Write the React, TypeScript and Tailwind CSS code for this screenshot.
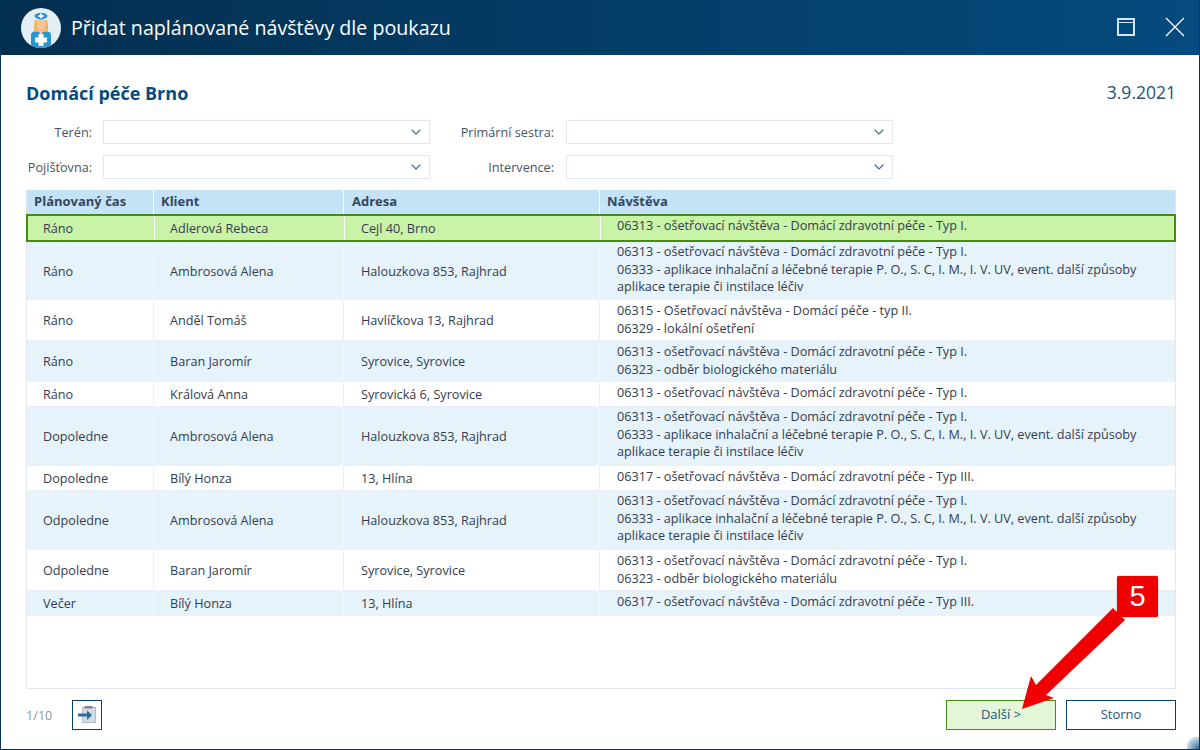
import { ChevronDown } from "lucide-react";

const typ1 = "06313 - ošetřovací návštěva - Domácí zdravotní péče - Typ I.";
const typ3 = "06317 - ošetřovací návštěva - Domácí zdravotní péče - Typ III.";
const inhal = [
    typ1,
    "06333 - aplikace inhalační a léčebné terapie P. O., S. C, I. M., I. V. UV, event. další způsoby",
    "aplikace terapie či instilace léčiv",
];
const odber = [typ1, "06323 - odběr biologického materiálu"];

const rows = [
    { time: "Ráno", client: "Adlerová Rebeca", address: "Cejl 40, Brno", visits: [typ1], h: "h-[28px]", tone: "selected" },
    { time: "Ráno", client: "Ambrosová Alena", address: "Halouzkova 853, Rajhrad", visits: inhal, h: "h-[58px]", tone: "blue" },
    { time: "Ráno", client: "Anděl Tomáš", address: "Havlíčkova 13, Rajhrad", visits: ["06315 - Ošetřovací návštěva - Domácí péče - typ II.", "06329 - lokální ošetření"], h: "h-[41px]", tone: "white" },
    { time: "Ráno", client: "Baran Jaromír", address: "Syrovice, Syrovice", visits: odber, h: "h-[41px]", tone: "blue" },
    { time: "Ráno", client: "Králová Anna", address: "Syrovická 6, Syrovice", visits: [typ1], h: "h-[25px]", tone: "white" },
    { time: "Dopoledne", client: "Ambrosová Alena", address: "Halouzkova 853, Rajhrad", visits: inhal, h: "h-[59px]", tone: "blue" },
    { time: "Dopoledne", client: "Bílý Honza", address: "13, Hlína", visits: [typ3], h: "h-[25px]", tone: "white" },
    { time: "Odpoledne", client: "Ambrosová Alena", address: "Halouzkova 853, Rajhrad", visits: inhal, h: "h-[59px]", tone: "blue" },
    { time: "Odpoledne", client: "Baran Jaromír", address: "Syrovice, Syrovice", visits: odber, h: "h-[41px]", tone: "white" },
    { time: "Večer", client: "Bílý Honza", address: "13, Hlína", visits: [typ3], h: "h-[25px]", tone: "blue" },
];

const columns = "grid grid-cols-[127px_190px_256px_1fr]";

function NurseIcon() {
    return (
        <svg width="40" height="40" viewBox="0 0 40 40" className="shrink-0">
            <defs>
                <clipPath id="nurse-clip"><circle cx="20" cy="20" r="20" /></clipPath>
            </defs>
            <circle cx="20" cy="20" r="20" fill="#e4eef5" />
            <g clipPath="url(#nurse-clip)">
                <path d="M10 40V27q0-3 4-4l3-1h6l3 1q4 1 4 4v13z" fill="#2796cf" />
                <path d="M14 12q-2 7 0 12h12q2-5 0-12z" fill="#efb25a" />
                <path d="M15.5 12q4.500-3 9 0v6q-1 4-3 5v2l-1.500 2-1.500-2v-2q-2-1-3-5z" fill="#f7c39a" />
                <ellipse cx="20" cy="8" rx="6.500" ry="3.200" fill="#2796cf" />
                <path d="M19 5.500h2v1.500h1.500v2H21v1h-2v-1h-1.500v-2H19z" fill="#fff" />
                <path d="M17.500 26h5v3.500H26v5h-3.500V38h-5v-3.500H14v-5h3.500z" fill="#fff" />
            </g>
        </svg>
    );
}

function Select({ width }: { width: string }) {
    return (
        <div className={`${width} h-[24px] border border-[#e3e7f3] bg-white flex items-center justify-end pr-[5px]`}>
            <ChevronDown size={16} strokeWidth={1.6} className="text-[#3f6a94]" />
        </div>
    );
}

function Field({ label, labelWidth, selectWidth }: { label: string; labelWidth: string; selectWidth: string }) {
    return (
        <div className="flex items-center">
            <span className={`${labelWidth} text-right text-[12.67px] text-[#46536a] whitespace-nowrap`}>{label}</span>
            <Select width={selectWidth} />
        </div>
    );
}

export default function App() {
    return (
        <div className="relative w-[1200px] h-[750px] overflow-hidden bg-white flex flex-col border-x border-b border-[#05365a] font-['Open_Sans',sans-serif]">
            {/* Title bar */}
            <div className="h-[55px] -mx-px shrink-0 flex items-center pl-[21px] pr-[15px] bg-gradient-to-r from-[#032f50] to-[#054b7e]">
                <NurseIcon />
                <h1 className="ml-[10px] text-[19.65px] text-white leading-none">Přidat naplánované návštěvy dle poukazu</h1>
                <div className="ml-auto -mt-[1px] flex items-center gap-[30px]">
                    <div className="w-[18px] h-[18px] border-2 border-white/85 flex flex-col">
                        <div className="h-[3px] border-b border-white/85" />
                    </div>
                    <svg width="20" height="20" viewBox="0 0 20 20" stroke="#fff" strokeWidth="1.3"><path d="M1 1l18 18M19 1L1 19" /></svg>
                </div>
            </div>

            <div className="flex-1 flex flex-col pl-[25px] pr-[23px] pt-[26px] min-h-0">
                {/* Heading */}
                <div className="flex items-center justify-between h-[24px]">
                    <h2 className="text-[18px] font-bold text-[#054b7e] leading-none">Domácí péče Brno</h2>
                    <span className="text-[17.5px] text-[#27527c] leading-none">3.9.2021</span>
                </div>

                {/* Filters */}
                <div className="mt-[15px] grid grid-cols-[404px_1fr] gap-y-[11px]">
                    <Field label="Terén:" labelWidth="w-[66px] mr-[11px]" selectWidth="w-[327px]" />
                    <Field label="Primární sestra:" labelWidth="w-[124px] mr-[12px]" selectWidth="w-[327px]" />
                    <Field label="Pojišťovna:" labelWidth="w-[66px] mr-[11px]" selectWidth="w-[327px]" />
                    <Field label="Intervence:" labelWidth="w-[124px] mr-[12px]" selectWidth="w-[327px]" />
                </div>

                {/* Table */}
                <div className="mt-[11px] h-[499px] shrink-0 border-x border-b border-[#e3e7f3] text-[12.67px] text-[#333c4e] w-[1150px]">
                    <div className={`${columns} h-[24px] bg-[#c5e3f6] font-bold text-[13px] text-[#35465f]`}>
                        <div className="pl-[7px] flex items-center border-r border-white">Plánovaný čas</div>
                        <div className="pl-[7px] flex items-center border-r border-white">Klient</div>
                        <div className="pl-[8px] flex items-center border-r border-white">Adresa</div>
                        <div className="pl-[7px] flex items-center">Návštěva</div>
                    </div>
                    {rows.map((row, i) => {
                        const sel = row.tone === "selected";
                        const bg = sel ? "bg-[#c9f3a6] border-2 border-[#458d10] -mx-px" : row.tone === "blue" ? "bg-[#e6f3fb]" : "bg-white border-b border-[#e9eef7]";
                        const sep = sel ? "border-r border-white" : row.tone === "blue" ? "border-r border-[#f1f8fd]" : "border-r border-[#e9eef7]";
                        return (
                            <div key={i} className={`${columns} ${row.h} ${bg} box-border`}>
                                <div className={`${sel ? "pl-[15px]" : "pl-[16px]"} flex items-center ${sep}`}>{row.time}</div>
                                <div className={`${sel ? "pl-[15px]" : "pl-[16px]"} flex items-center ${sep}`}>{row.client}</div>
                                <div className={`${sel ? "pl-[16px]" : "pl-[17px]"} flex items-center ${sep}`}>{row.address}</div>
                                <div className={`${sel ? "pl-[16px] pt-[1px]" : row.visits.length === 3 ? "pl-[17px] pt-[1px]" : "pl-[17px] pt-[2px]"} flex flex-col`}>
                                    {row.visits.map((v, j) => (
                                        <div key={j} className="leading-[17.5px] whitespace-nowrap">{v}</div>
                                    ))}
                                </div>
                            </div>
                        );
                    })}
                </div>

                {/* Footer */}
                <div className="mt-[11px] flex items-center h-[30px] w-[1150px]">
                    <span className="text-[12.67px] text-[#8a97ad] w-[46px]">1/10</span>
                    <div className="w-[30px] h-[30px] border border-[#05426e] flex items-center justify-center">
                        <svg width="22" height="22" viewBox="0 0 22 22">
                            <rect x="6.500" y="3.500" width="13" height="15" fill="#d5dce2" stroke="#b4bcc4" />
                            <rect x="8.500" y="2" width="8" height="2.500" fill="#8d7f96" />
                            <path d="M2 9.500h9V6.500l5 4.500-5 5v-3.500H2z" fill="#2b6a9b" />
                        </svg>
                    </div>
                    <button className="ml-auto w-[110px] h-[30px] border border-[#458d10] bg-[#e4f6d8] text-[13px] text-[#27527c]">Další &gt;</button>
                    <button className="ml-[10px] w-[110px] h-[30px] border border-[#05426e] bg-white text-[13px] text-[#27527c]">Storno</button>
                </div>
            </div>

            {/* Resize grip */}
            <div className="absolute right-0 bottom-0 w-[12px] h-[12px] bg-[radial-gradient(circle_at_100%_100%,#2b6a9b_0%,#cfe0ec_75%,transparent_77%)]" />

            {/* Callout over the buttons */}
            <svg className="absolute left-[1019px] top-[605px]" width="110" height="110" viewBox="1020 605 110 110">
                <path d="M1113 608L1125 620 1046 695 1054 698 1022 709 1031 676 1036 685z" fill="#f00000" />
            </svg>
            <div className="absolute left-[1116px] top-[576px] w-[41px] h-[41px] rounded-[2px] bg-[#f00000] shadow-[0_0_1px_#700] flex items-center justify-center text-white text-[29px] font-['Liberation_Sans',sans-serif]">5</div>
        </div>
    );
}
